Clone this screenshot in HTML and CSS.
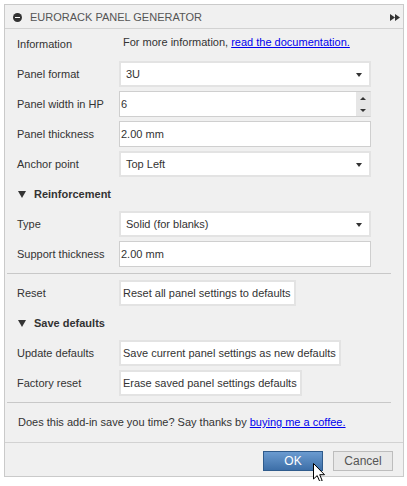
FILE: index.html
```html
<!DOCTYPE html>
<html>
<head>
<meta charset="utf-8">
<link rel="stylesheet" href="styles.css">
</head>
<body>
<div class="dialog">
  <div class="header">
    <span class="hdr-icon"></span>
    <span class="title">EURORACK PANEL GENERATOR</span>
    <svg class="hdr-arrows" width="10" height="7" viewBox="0 0 10 7"><path d="M0 0L5 3.5L0 7Z M5 0L10 3.5L5 7Z" fill="#333"/></svg>
  </div>
  <div class="body">
    <div class="row">
      <span class="label">Information</span>
      <span class="info">For more information, <a href="#">read the documentation.</a></span>
    </div>
    <div class="row">
      <span class="label">Panel format</span>
      <div class="select"><span>3U</span><span class="caret"></span></div>
    </div>
    <div class="row">
      <span class="label">Panel width in HP</span>
      <div class="spin">
        <span class="spin-val">6</span>
        <span class="spin-btns"><span class="up"></span><span class="down"></span></span>
      </div>
    </div>
    <div class="row">
      <span class="label">Panel thickness</span>
      <div class="input">2.00 mm</div>
    </div>
    <div class="row">
      <span class="label">Anchor point</span>
      <div class="select"><span>Top Left</span><span class="caret"></span></div>
    </div>
    <div class="row group"><span class="tri"></span>Reinforcement</div>
    <div class="row">
      <span class="label">Type</span>
      <div class="select"><span>Solid (for blanks)</span><span class="caret"></span></div>
    </div>
    <div class="row">
      <span class="label">Support thickness</span>
      <div class="input">2.00 mm</div>
    </div>
    <div class="sep"></div>
    <div class="row">
      <span class="label">Reset</span>
      <span class="btn">Reset all panel settings to defaults</span>
    </div>
    <div class="row group"><span class="tri"></span>Save defaults</div>
    <div class="row">
      <span class="label">Update defaults</span>
      <span class="btn">Save current panel settings as new defaults</span>
    </div>
    <div class="row">
      <span class="label">Factory reset</span>
      <span class="btn">Erase saved panel settings defaults</span>
    </div>
    <div class="sep"></div>
    <div class="thanks">Does this add-in save you time? Say thanks by <a href="#">buying me a coffee.</a></div>
  </div>
  <div class="footer">
    <span class="ok">OK</span>
    <span class="cancel">Cancel</span>
  </div>
</div>
<svg class="cursor" width="13" height="20" viewBox="0 0 13 20"><path d="M0.5 0.5L0.5 16L4.2 12.6L6.8 18.6L9.2 17.6L6.7 11.7L11.5 11.7Z" fill="#fff" stroke="#000" stroke-width="1" stroke-linejoin="miter"/></svg>
</body>
</html>
```
FILE: styles.css
```css
html, body { margin: 0; padding: 0; background: #fff; }
body {
  font-family: "Liberation Sans", Arial, sans-serif;
  font-size: 11px;
  color: #333;
  position: relative;
}
.dialog {
  margin: 4px;
  width: 400px;
  height: 473px;
  box-sizing: border-box;
  border: 1px solid #cacaca;
  background: #f0f0f0;
  display: flex;
  flex-direction: column;
}
.header {
  height: 23px;
  border-bottom: 1px solid #d2d2d2;
  display: flex;
  align-items: center;
  padding: 0 3px 0 8px;
  flex: none;
}
.hdr-icon {
  width: 9px;
  height: 9px;
  border-radius: 50%;
  background: #333;
  position: relative;
  margin-right: 8px;
  margin-top: 1px;
}
.hdr-icon::after {
  content: "";
  position: absolute;
  left: 2px;
  top: 4px;
  width: 5px;
  height: 1px;
  background: #fff;
}
.title { color: #555; font-size: 11px; flex: 1; padding-top: 1px; }
.hdr-arrows { margin-right: 0; margin-top: 1px; }
.body {
  padding: 2px 0 0 12px;
  flex: 1;
  display: flex;
  flex-direction: column;
  gap: 4px;
}
.row {
  height: 26px;
  display: flex;
  align-items: center;
}
.label { width: 102px; flex: none; }
.info { padding-left: 4px; margin-top: -4px; }
a { color: #0000ee; text-decoration: underline; }
.select {
  width: 252px;
  height: 26px;
  box-sizing: border-box;
  border: 2px solid #e3e3e3;
  background: #fff;
  display: flex;
  align-items: center;
  justify-content: space-between;
  padding: 0 7px 0 5px;
}
.caret {
  width: 0; height: 0;
  border-left: 3.5px solid transparent;
  border-right: 3.5px solid transparent;
  border-top: 4px solid #333;
  margin-top: 1px;
}
.spin {
  width: 252px;
  height: 26px;
  box-sizing: border-box;
  border: 1px solid #cfcfcf;
  border-right-color: #e3e3e3;
  background: #fff;
  display: flex;
  align-items: stretch;
}
.spin-val { flex: 1; display: flex; align-items: center; padding-left: 1px; }
.spin-btns {
  width: 14px;
  background: #e6e6e6;
  display: flex;
  flex-direction: column;
  align-items: center;
  justify-content: space-around;
}
.up, .down {
  width: 0; height: 0;
  border-left: 3px solid transparent;
  border-right: 3px solid transparent;
}
.up { border-bottom: 3px solid #333; }
.down { border-top: 3px solid #333; }
.input {
  width: 252px;
  height: 26px;
  box-sizing: border-box;
  border: 1px solid #cfcfcf;
  background: #fff;
  display: flex;
  align-items: center;
  padding-left: 1px;
}
.group { font-weight: bold; padding-left: 1px; }
.tri {
  width: 0; height: 0;
  border-left: 4.5px solid transparent;
  border-right: 4.5px solid transparent;
  border-top: 7px solid #333;
  margin-right: 8px;
}
.btn {
  height: 26px;
  box-sizing: border-box;
  border: 2px solid #e3e3e3;
  background: #fff;
  display: flex;
  align-items: center;
  padding: 0 3px 0 2px;
}
.sep {
  height: 1px;
  background: #c8c8c8;
  margin: 2px 12px 2px -10px;
}
.thanks { padding: 7px 0 0 1px; }
.footer {
  height: 34px;
  border-top: 1px solid #d2d2d2;
  flex: none;
  display: flex;
  align-items: flex-start;
  justify-content: flex-end;
  padding: 8px 10px 0 0;
  gap: 10px;
  box-sizing: border-box;
}
.ok, .cancel {
  height: 20px;
  box-sizing: border-box;
  display: flex;
  align-items: center;
  justify-content: center;
  font-size: 12px;
}
.ok {
  width: 60px;
  border: 1px solid #2f5b8c;
  background: linear-gradient(#6b9bd0, #3d6fa8);
  color: #fff;
}
.cancel {
  width: 60px;
  border: 1px solid #bdbdbd;
  background: #e8e8e8;
  color: #555;
}
.cursor { position: absolute; left: 313px; top: 463px; }
```
